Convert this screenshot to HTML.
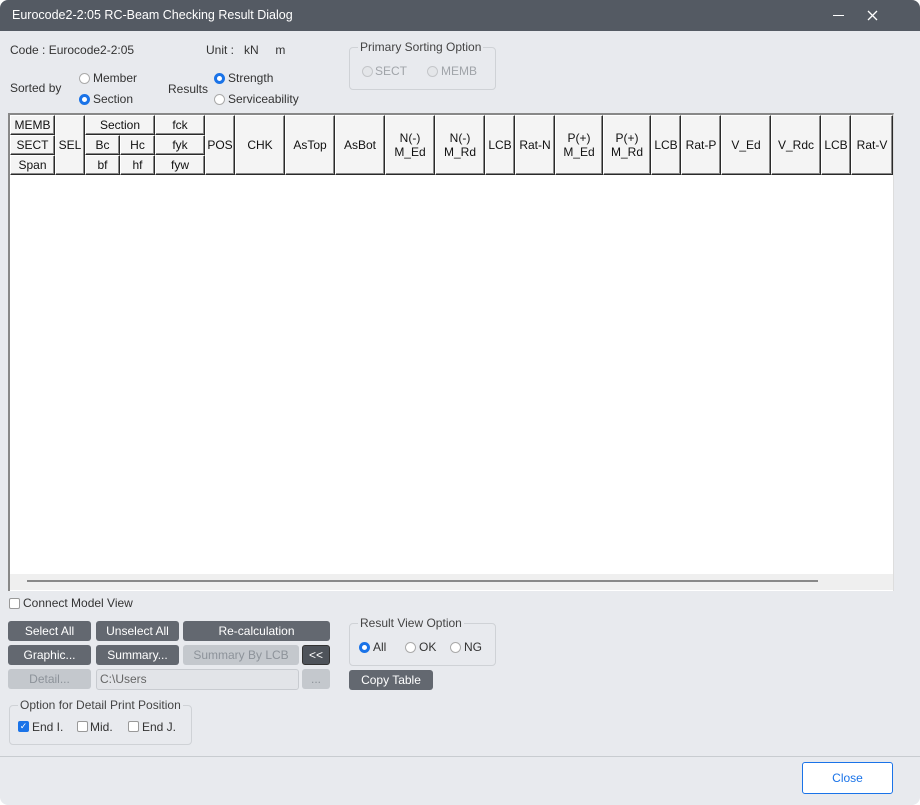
<!DOCTYPE html>
<html><head><meta charset="utf-8"><style>
*{box-sizing:border-box;margin:0;padding:0}
body{width:920px;height:805px;overflow:hidden;background:#fff;font-family:"Liberation Sans",sans-serif;font-size:12px;color:#333}
.win{position:absolute;left:0;top:0;width:920px;height:805px;background:#e8eaee;border-radius:8px;overflow:hidden}
.title{position:absolute;left:0;top:0;width:920px;height:31px;background:#545a63;color:#fff;font-size:12.5px;line-height:31px;padding-left:12px}
.a{position:absolute;white-space:nowrap}
.rad{position:absolute;width:11px;height:11px;border-radius:50%;border:1px solid #aaa;background:#fff}
.rad.on{border:3px solid #1a73e8}
.rad.dis{background:#e4e6e9;border-color:#c4c6c9}
.grp{position:absolute;border:1px solid #cfd2d6;border-radius:4px}
.grp span{position:absolute;top:-8px;left:8px;background:#e8eaee;padding:0 2px;color:#444;font-size:12px}
.c{position:absolute;background:#f4f4f4;border-right:1px solid #2a2a2a;border-bottom:1px solid #2a2a2a;border-left:1px solid #fff;border-top:1px solid #fff;box-shadow:inset -1px -1px 0 #888;display:flex;align-items:center;justify-content:center;text-align:center;color:#111;font-size:12px;line-height:14px}
.b{position:absolute;height:20px;background:#636870;color:#fff;border-radius:3px;text-align:center;line-height:20px;font-size:12px}
.b.d{background:#c4c8cd;color:#8d939a}
.chk{position:absolute;width:11px;height:11px;border:1px solid #999;border-radius:2px;background:#fff}
</style></head><body><div class="win">
<div class="title">Eurocode2-2:05 RC-Beam Checking Result Dialog</div>
<div class="a" style="left:833px;top:15px;width:11px;height:1px;background:#fff"></div>
<svg class="a" style="left:867px;top:10px" width="11" height="11"><path d="M1 1L10 10M10 1L1 10" stroke="#fff" stroke-width="1.3"/></svg>

<div class="a" style="left:10px;top:43px">Code : Eurocode2-2:05</div>
<div class="a" style="left:206px;top:43px">Unit :&nbsp;&nbsp; kN&nbsp;&nbsp;&nbsp;&nbsp; m</div>
<div class="a" style="left:10px;top:81px">Sorted by</div>
<div class="rad" style="left:79px;top:73px"></div><div class="a" style="left:93px;top:71px">Member</div>
<div class="rad on" style="left:79px;top:94px"></div><div class="a" style="left:93px;top:92px">Section</div>
<div class="a" style="left:168px;top:82px">Results</div>
<div class="rad on" style="left:214px;top:73px"></div><div class="a" style="left:228px;top:71px">Strength</div>
<div class="rad" style="left:214px;top:94px"></div><div class="a" style="left:228px;top:92px">Serviceability</div>
<div class="grp" style="left:349px;top:47px;width:147px;height:43px"><span>Primary Sorting Option</span></div>
<div class="rad dis" style="left:362px;top:66px"></div><div class="a" style="left:375px;top:64px;color:#a0a4a9">SECT</div>
<div class="rad dis" style="left:427px;top:66px"></div><div class="a" style="left:441px;top:64px;color:#a0a4a9">MEMB</div>

<div class="a" style="left:8px;top:113px;width:886px;height:478px;background:#fff;border-top:2px solid #888;border-left:2px solid #888;border-right:1px solid #ddd"></div>
<div class="a" style="left:10px;top:574px;width:883px;height:16px;background:#efefef"></div>
<div class="a" style="left:27px;top:580px;width:791px;height:2px;background:#888"></div>

<div class="c" style="left:10px;top:115px;width:45px;height:20px">MEMB</div>
<div class="c" style="left:10px;top:135px;width:45px;height:20px">SECT</div>
<div class="c" style="left:10px;top:155px;width:45px;height:20px">Span</div>
<div class="c" style="left:55px;top:115px;width:30px;height:60px">SEL</div>
<div class="c" style="left:85px;top:115px;width:70px;height:20px">Section</div>
<div class="c" style="left:85px;top:135px;width:35px;height:20px">Bc</div>
<div class="c" style="left:120px;top:135px;width:35px;height:20px">Hc</div>
<div class="c" style="left:85px;top:155px;width:35px;height:20px">bf</div>
<div class="c" style="left:120px;top:155px;width:35px;height:20px">hf</div>
<div class="c" style="left:155px;top:115px;width:50px;height:20px">fck</div>
<div class="c" style="left:155px;top:135px;width:50px;height:20px">fyk</div>
<div class="c" style="left:155px;top:155px;width:50px;height:20px">fyw</div>
<div class="c" style="left:205px;top:115px;width:30px;height:60px">POS</div>
<div class="c" style="left:235px;top:115px;width:50px;height:60px">CHK</div>
<div class="c" style="left:285px;top:115px;width:50px;height:60px">AsTop</div>
<div class="c" style="left:335px;top:115px;width:50px;height:60px">AsBot</div>
<div class="c" style="left:385px;top:115px;width:50px;height:60px">N(-)<br>M_Ed</div>
<div class="c" style="left:435px;top:115px;width:50px;height:60px">N(-)<br>M_Rd</div>
<div class="c" style="left:485px;top:115px;width:30px;height:60px">LCB</div>
<div class="c" style="left:515px;top:115px;width:40px;height:60px">Rat-N</div>
<div class="c" style="left:555px;top:115px;width:48px;height:60px">P(+)<br>M_Ed</div>
<div class="c" style="left:603px;top:115px;width:48px;height:60px">P(+)<br>M_Rd</div>
<div class="c" style="left:651px;top:115px;width:30px;height:60px">LCB</div>
<div class="c" style="left:681px;top:115px;width:40px;height:60px">Rat-P</div>
<div class="c" style="left:721px;top:115px;width:50px;height:60px">V_Ed</div>
<div class="c" style="left:771px;top:115px;width:50px;height:60px">V_Rdc</div>
<div class="c" style="left:821px;top:115px;width:30px;height:60px">LCB</div>
<div class="c" style="left:851px;top:115px;width:42px;height:60px">Rat-V</div>

<div class="chk" style="left:9px;top:598px"></div><div class="a" style="left:23px;top:596px">Connect Model View</div>

<div class="b" style="left:8px;top:621px;width:83px">Select All</div>
<div class="b" style="left:96px;top:621px;width:83px">Unselect All</div>
<div class="b" style="left:183px;top:621px;width:147px">Re-calculation</div>
<div class="b" style="left:8px;top:645px;width:83px">Graphic...</div>
<div class="b" style="left:96px;top:645px;width:83px">Summary...</div>
<div class="b d" style="left:183px;top:645px;width:116px">Summary By LCB</div>
<div class="b" style="left:302px;top:645px;width:28px;background:#4e535a;border:1px solid #333;line-height:18px">&lt;&lt;</div>
<div class="b d" style="left:8px;top:669px;width:83px">Detail...</div>
<div class="a" style="left:96px;top:669px;width:203px;height:21px;background:#e2e4e8;border:1px solid #c8cbd0;border-radius:3px;padding-left:3px;line-height:19px;color:#666">C:\Users</div>
<div class="b d" style="left:302px;top:669px;width:28px">...</div>

<div class="grp" style="left:9px;top:705px;width:183px;height:40px"><span>Option for Detail Print Position</span></div>
<div class="chk" style="left:18px;top:721px;background:#1a73e8;border-color:#1a73e8;color:#fff;font-size:9px;line-height:9px;text-align:center">✓</div><div class="a" style="left:32px;top:720px">End I.</div>
<div class="chk" style="left:77px;top:721px"></div><div class="a" style="left:90px;top:720px">Mid.</div>
<div class="chk" style="left:128px;top:721px"></div><div class="a" style="left:142px;top:720px">End J.</div>

<div class="grp" style="left:349px;top:623px;width:147px;height:43px"><span>Result View Option</span></div>
<div class="rad on" style="left:359px;top:642px"></div><div class="a" style="left:373px;top:640px">All</div>
<div class="rad" style="left:405px;top:642px"></div><div class="a" style="left:419px;top:640px">OK</div>
<div class="rad" style="left:450px;top:642px"></div><div class="a" style="left:464px;top:640px">NG</div>
<div class="b" style="left:349px;top:670px;width:84px">Copy Table</div>

<div class="a" style="left:0;top:756px;width:920px;height:1px;background:#c8ccd0"></div>
<div class="a" style="left:802px;top:762px;width:91px;height:32px;background:#fff;border:1px solid #1a73e8;border-radius:3px;color:#1a73e8;text-align:center;line-height:30px">Close</div>
</div></body></html>
